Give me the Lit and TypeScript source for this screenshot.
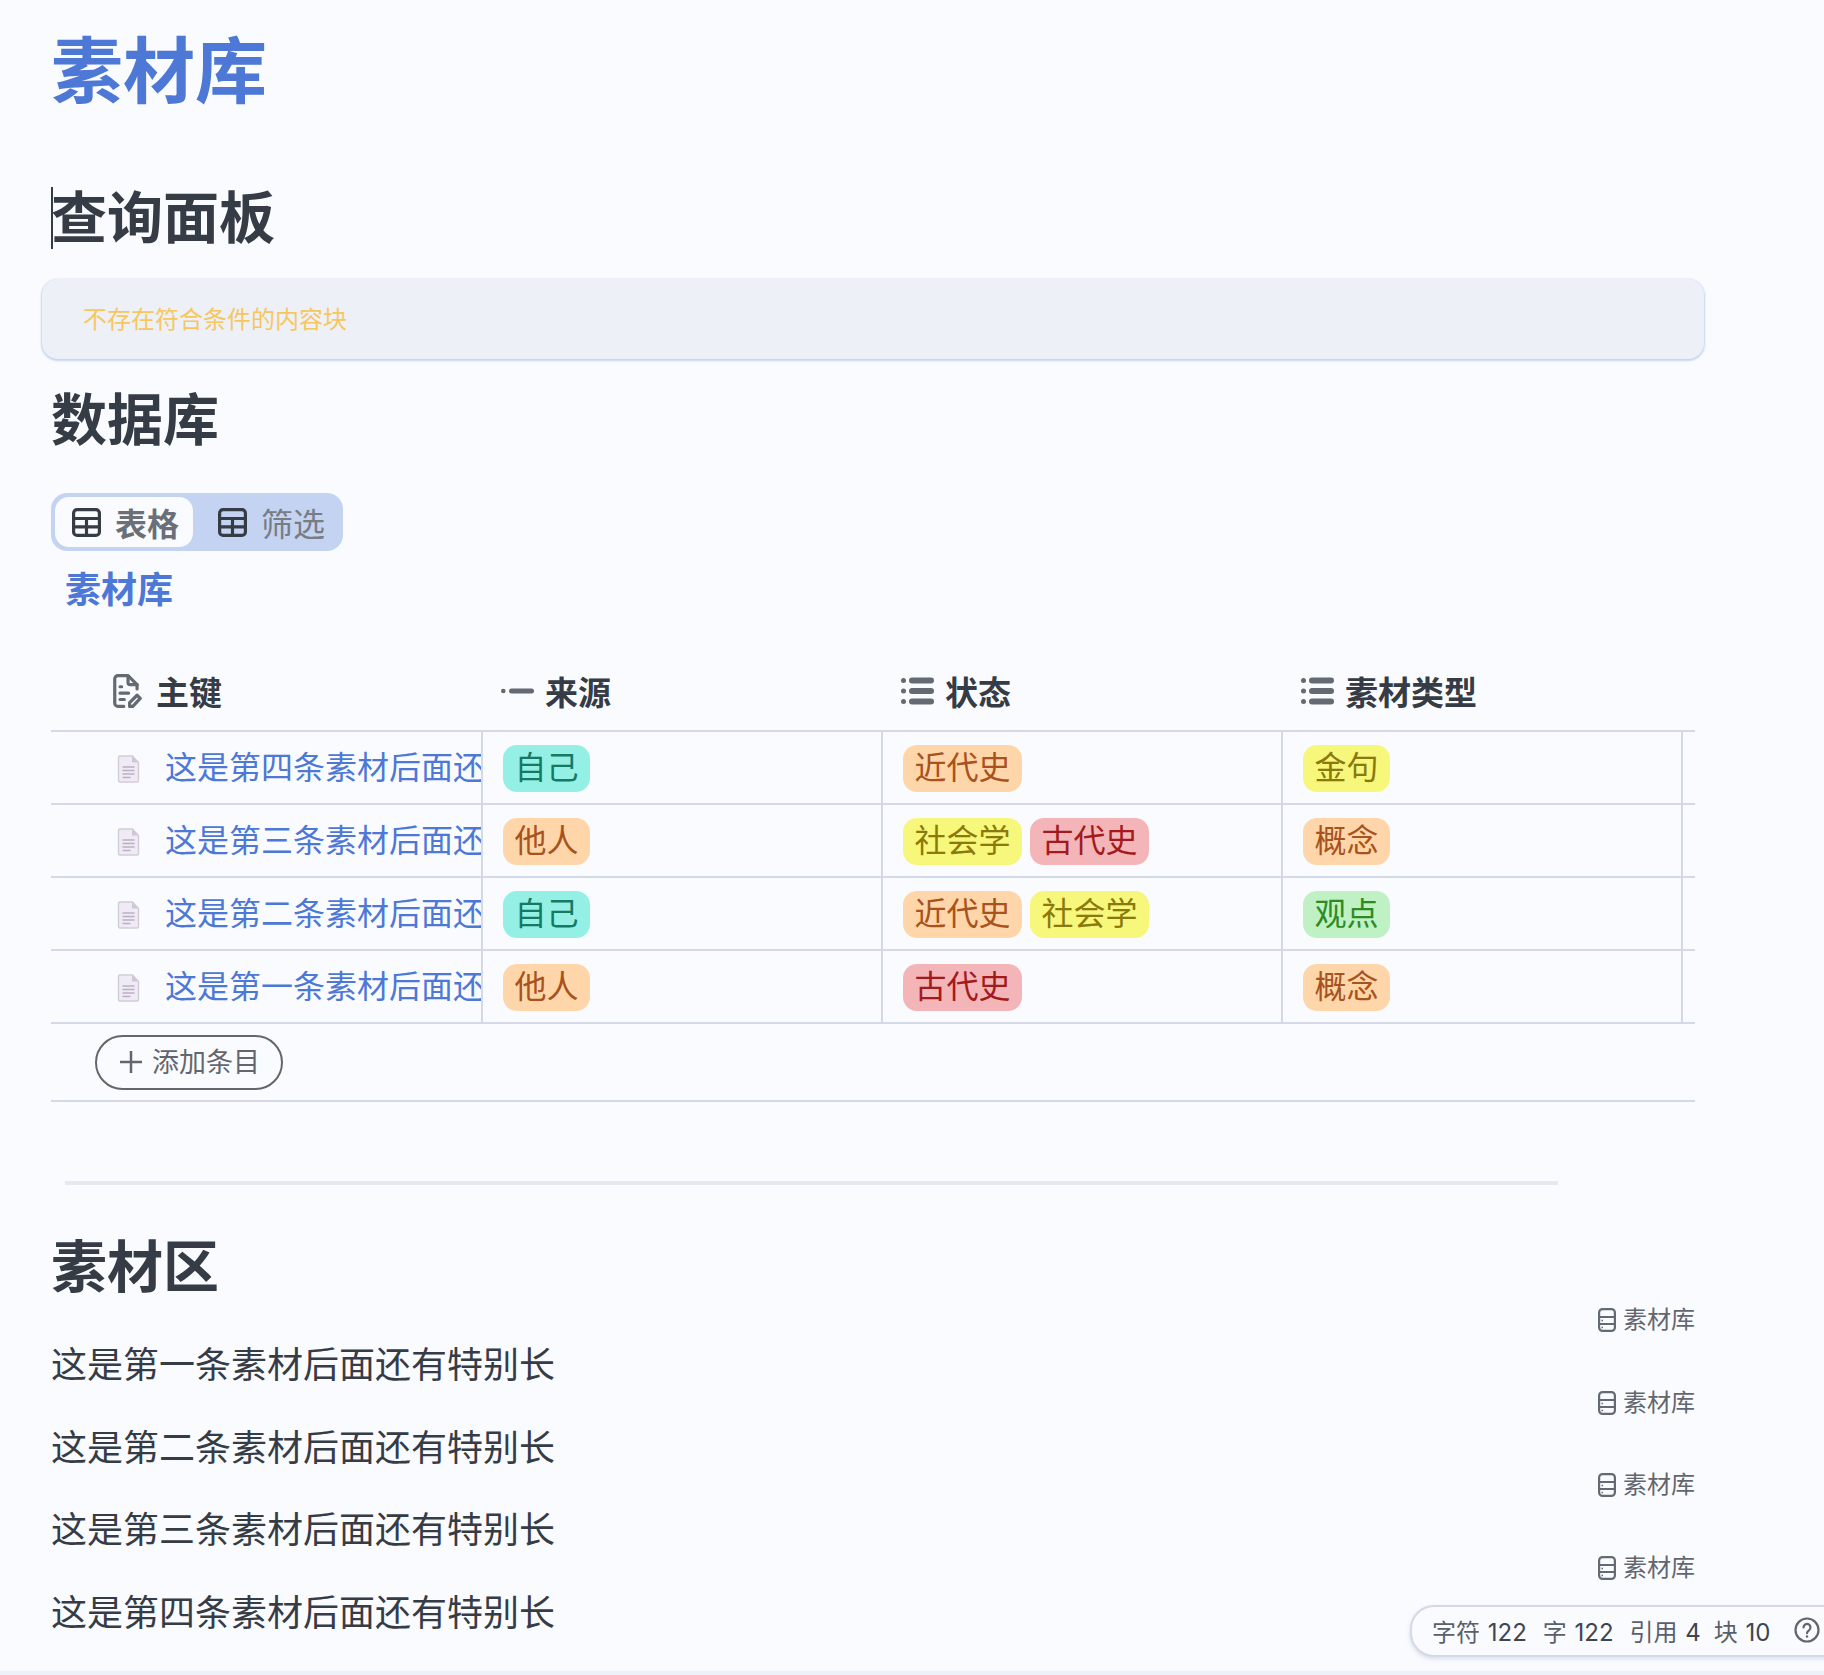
import { LitElement, html, css } from "lit";
import { customElement } from "lit/decorators.js";

const tableIcon = html`<svg class="ti" viewBox="0 0 29 29" fill="none" stroke="currentColor" stroke-width="3.200"><rect x="1.600" y="1.600" width="25.800" height="25.800" rx="3.500"/><path d="M1.600 10.500h25.800M1.600 18.800h25.800M14.500 10.500v17"/></svg>`;
const docIcon = html`<svg class="doc" viewBox="0 0 22 28"><path d="M2.500 1h12.500L21 7.500V25.500a1.500 1.500 0 0 1-1.500 1.500H2.500A1.500 1.500 0 0 1 1 25.500V2.500A1.500 1.500 0 0 1 2.500 1z" fill="#f0eaf5" stroke="#d2cbd9" stroke-width="1.400"/><path d="M14.500 1v6.500H21z" fill="#cfc7d8"/><path d="M5 12h12M5 15.500h12M5 19h12M5 22.500h8" stroke="#b9b0c4" stroke-width="1.300"/></svg>`;
const keyIcon = html`<svg class="hi key" viewBox="0 0 27 32" fill="none" stroke="#646a73" stroke-width="3" stroke-linecap="round" stroke-linejoin="round"><path d="M10 30.500H4.500a3 3 0 0 1-3-3V4.500a3 3 0 0 1 3-3h9.500L22.500 10v4"/><path d="M14 2v6a2 2 0 0 0 2 2h6.500"/><path d="M6.500 12h1.500M6.500 18h8M6.500 24h4"/><path d="M15.500 30.500v-3.500l7-7 3 3-7 7.500z"/></svg>`;
const dashIcon = html`<svg class="hi" viewBox="0 0 33 32" fill="#646a73"><circle cx="2.300" cy="16" r="2.300"/><rect x="8" y="13.500" width="25" height="5" rx="2.500"/></svg>`;
const listIcon = html`<svg class="hi" viewBox="0 0 33 32" fill="#646a73"><circle cx="2.500" cy="5.500" r="2.500"/><rect x="8" y="2.500" width="25" height="6" rx="3"/><circle cx="2.500" cy="16" r="2.500"/><rect x="8" y="13" width="25" height="6" rx="3"/><circle cx="2.500" cy="26.500" r="2.500"/><rect x="8" y="23.500" width="25" height="6" rx="3"/></svg>`;
const dbIcon = html`<svg class="db" viewBox="0 0 18 24" fill="none" stroke="#646a73" stroke-width="2.200"><rect x="1.100" y="1.100" width="15.800" height="21.800" rx="3.500"/><path d="M1 9h16M1 16h16"/><path d="M3.500 12.500h1.500M3.500 19.500h1.500" stroke-width="1.500"/></svg>`;

type Tag = [string, string];
const rows: { t: string; src: Tag; st: Tag[]; ty: Tag }[] = [
  { t: "这是第四条素材后面还有特别长", src: ["自己", "teal"], st: [["近代史", "orange"]], ty: ["金句", "yellow"] },
  { t: "这是第三条素材后面还有特别长", src: ["他人", "orange"], st: [["社会学", "yellow"], ["古代史", "red"]], ty: ["概念", "orange"] },
  { t: "这是第二条素材后面还有特别长", src: ["自己", "teal"], st: [["近代史", "orange"], ["社会学", "yellow"]], ty: ["观点", "green"] },
  { t: "这是第一条素材后面还有特别长", src: ["他人", "orange"], st: [["古代史", "red"]], ty: ["概念", "orange"] },
];
const paras = ["这是第一条素材后面还有特别长", "这是第二条素材后面还有特别长", "这是第三条素材后面还有特别长", "这是第四条素材后面还有特别长"];

@customElement("app-root")
export class AppRoot extends LitElement {
  static styles = css`
    :host {
      display: block;
      position: relative;
      height: 1675px;
      overflow: hidden;
      background: #fafbff;
      color: #363c45;
      font-family: "Liberation Sans", "Noto Sans CJK SC", sans-serif;
    }
    .page { padding: 22px 129px 0 51px; }
    h1, h2 { margin: 0; font-weight: 700; }
    h1 { font-size: 72px; line-height: 100px; color: #4d78d6; height: 100px; }
    h2 { font-size: 56px; line-height: 76px; height: 76px; position: relative; }
    .q { margin-top: 59px; }
    .caret { position: absolute; left: 0; top: 6px; width: 2px; height: 62px; background: #363c45; }
    .callout {
      margin: 22px -9px 24px -9px;
      height: 80px;
      box-sizing: border-box;
      background: #edf0f7;
      border-radius: 16px;
      box-shadow: 0 1px 2px 1px #c6d4f2;
      color: #f6c760;
      font-size: 24px;
      line-height: 82px;
      padding-left: 41px;
    }
    .tabs {
      margin-top: 34px;
      display: flex;
      height: 58px;
      box-sizing: border-box;
      padding: 4px;
      width: 292px;
      background: #c4d3f1;
      border-radius: 16px;
    }
    .tab {
      display: flex;
      align-items: center;
      gap: 14px;
      font-size: 32px;
      white-space: nowrap;
      color: #777c85;
      border-radius: 14px;
    }
    .tab.on { background: #fafbff; color: #6a6f78; font-weight: 700; width: 138px; flex: none; box-sizing: border-box; padding-left: 17px; }
    .tab:not(.on) { padding-left: 25px; }
    .ti { width: 29px; height: 29px; color: #363c45; flex: none; }
    .dbname { font-size: 36px; font-weight: 700; color: #4d78d6; line-height: 46px; margin: 17px 0 0 14px; }
    .table { margin-top: 36px; }
    .row { display: grid; grid-template-columns: 432px 400px 400px 400px 12px; height: 73px; box-sizing: border-box; border-bottom: 2px solid #d3d9e6; }
    .head { height: 82px; font-size: 33px; font-weight: 700; padding-top: 2px; }
    .hc { display: flex; align-items: center; gap: 11px; padding-left: 18px; }
    .hc.first { padding-left: 62px; gap: 14px; }
    .hi { width: 33px; height: 32px; flex: none; }
    .hi.key { width: 29px; height: 34px; }
    .c { border-right: 2px solid #d3d9e6; display: flex; align-items: center; gap: 8px; padding: 2px 0 0 20px; min-width: 0; }
    .c.first { padding-left: 66px; gap: 25px; overflow: hidden; white-space: nowrap; color: #4d78d6; font-size: 32px; }
    .c.first span { position: relative; top: -4px; }
    .doc { width: 23px; height: 28px; flex: none; }
    .tag { font-size: 32px; line-height: 47px; height: 47px; padding: 0 11.500px; border-radius: 14px; white-space: nowrap; }
    .teal { background: #94f0e4; color: #157a63; }
    .orange { background: #ffd6a9; color: #a8521d; }
    .yellow { background: #f7f77b; color: #8a7a0d; }
    .red { background: #f4b5b8; color: #a31a1d; }
    .green { background: #bff1c4; color: #2d8b21; }
    .add { height: 78px; display: flex; align-items: center; border-bottom: 2px solid #d3d9e6; box-sizing: border-box; padding-left: 44px; }
    .btn {
      display: flex; align-items: center; gap: 9px;
      height: 55px; width: 188px; box-sizing: border-box;
      border: 2px solid #62666e; border-radius: 28px;
      color: #62666e; font-size: 27px; padding: 0 0 3px 22px; white-space: nowrap;
    }
    .btn svg { width: 24px; height: 24px; flex: none; position: relative; top: 1px; }
    hr { border: 0; height: 4px; background: #e6e9f1; margin: 79px 137px 0 14px; }
    .s { margin-top: 45px; }
    .para { display: flex; justify-content: space-between; align-items: flex-start; height: 82.500px; font-size: 36px; }
    .first-para { margin-top: -2px; }
    .txt { margin-top: 42px; line-height: 40px; }
    .ref { display: flex; align-items: center; gap: 7px; font-size: 24px; color: #62666e; line-height: 32px; }
    .db { width: 18px; height: 24px; flex: none; }
    .status {
      position: absolute; left: 1410px; top: 1605px; width: 460px; height: 52px; box-sizing: border-box;
      background: #fafbff; border: 2px solid #d3d9e6; border-right: 0; border-radius: 24px 0 0 24px;
      box-shadow: 0 2px 4px rgba(150,165,195,.35);
      display: flex; align-items: center; gap: 16px; padding: 0 0 2px 20px;
      font-family: Inter, "Noto Sans CJK SC", sans-serif;
      font-size: 24px; color: #5a606a; white-space: nowrap; word-spacing: 1px;
    }
    .status b { font-weight: 400; color: #3e4550; }
    .status .last { margin-left: -3px; }
    .status svg { width: 26px; height: 26px; margin-left: 7px; flex: none; }
    .strip { position: absolute; left: 0; right: 0; bottom: 0; height: 4px; background: #eef1fa; }
  `;

  render() {
    return html`
      <div class="page">
        <h1>素材库</h1>
        <h2 class="q"><span class="caret"></span>查询面板</h2>
        <div class="callout">不存在符合条件的内容块</div>
        <h2>数据库</h2>
        <div class="tabs">
          <div class="tab on">${tableIcon}表格</div>
          <div class="tab">${tableIcon}筛选</div>
        </div>
        <div class="dbname">素材库</div>
        <div class="table">
          <div class="row head">
            <div class="hc first">${keyIcon}主键</div>
            <div class="hc">${dashIcon}来源</div>
            <div class="hc">${listIcon}状态</div>
            <div class="hc">${listIcon}素材类型</div>
            <div></div>
          </div>
          ${rows.map(r => html`
            <div class="row">
              <div class="c first">${docIcon}<span>${r.t}</span></div>
              <div class="c"><span class="tag ${r.src[1]}">${r.src[0]}</span></div>
              <div class="c">${r.st.map(s => html`<span class="tag ${s[1]}">${s[0]}</span>`)}</div>
              <div class="c"><span class="tag ${r.ty[1]}">${r.ty[0]}</span></div>
              <div></div>
            </div>`)}
          <div class="add">
            <div class="btn">
              <svg viewBox="0 0 24 24" stroke="currentColor" stroke-width="2.500" fill="none"><path d="M12 1v22M1 12h22"/></svg>
              添加条目
            </div>
          </div>
        </div>
        <hr />
        <h2 class="s">素材区</h2>
        ${paras.map((p, i) => html`
          <div class="para ${i === 0 ? "first-para" : ""}"><span class="txt">${p}</span><span class="ref">${dbIcon}素材库</span></div>`)}
      </div>
      <div class="status">
        <span>字符 <b>122</b></span><span>字 <b>122</b></span><span>引用 <b>4</b></span><span class="last">块 <b>10</b></span>
        <svg viewBox="0 0 26 26" fill="none" stroke="#5f6670" stroke-width="2.200"><circle cx="13" cy="13" r="11.500"/><path d="M9.500 10.500a3.500 3.500 0 1 1 5.500 2.800c-1.200.8-2 1.400-2 2.900" stroke-linecap="round"/><circle cx="13" cy="19.500" r="1.200" fill="#5f6670" stroke="none"/></svg>
      </div>
      <div class="strip"></div>
    `;
  }
}
